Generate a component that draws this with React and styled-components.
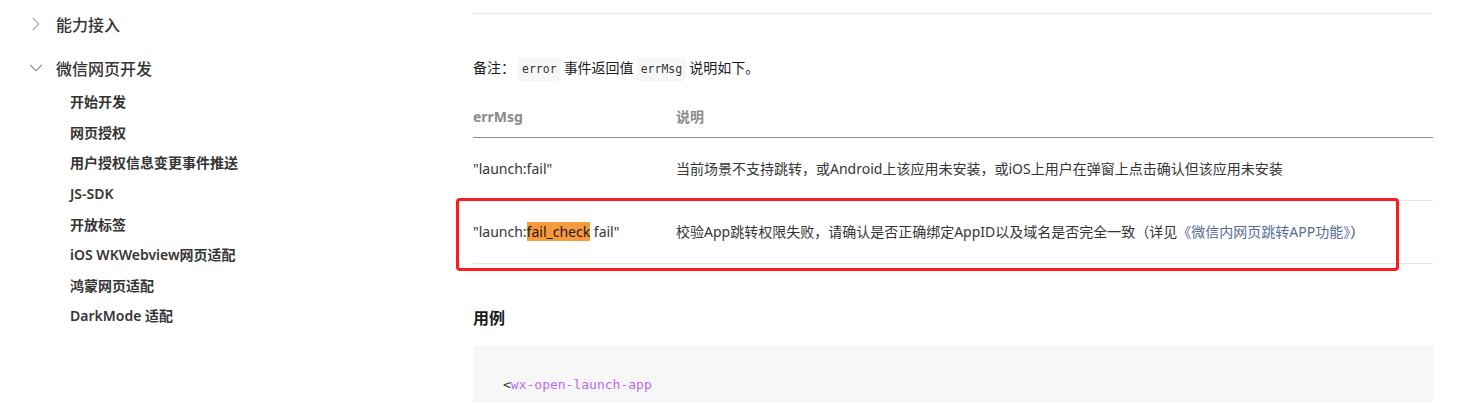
import styled, { createGlobalStyle } from "styled-components";
import { ChevronRight, ChevronDown } from "lucide-react";

const GlobalStyle = createGlobalStyle`
  body {
    margin: 0;
    background: #fff;
    font-family: "Noto Sans", "Noto Sans CJK SC", sans-serif;
    color: #353535;
  }
`;

const subItems = [
  "开始开发",
  "网页授权",
  "用户授权信息变更事件推送",
  "JS-SDK",
  "开放标签",
  "iOS WKWebview网页适配",
  "鸿蒙网页适配",
  "DarkMode 适配",
];

const App = () => {
  return (
    <Page>
      <GlobalStyle />
      <Sidebar>
        <GroupTitle>
          <ChevronRight size={22} strokeWidth={1.4} color="#b2b2b2" />
          <span>能力接入</span>
        </GroupTitle>
        <GroupTitle>
          <ChevronDown size={22} strokeWidth={1.4} color="#9a9a9a" />
          <span>微信网页开发</span>
        </GroupTitle>
        <SubList>
          {subItems.map((t) => (
            <SubItem key={t}>{t}</SubItem>
          ))}
        </SubList>
      </Sidebar>

      <Content>
        <TopRule />
        <Note>
          备注：<InlineCode>error</InlineCode>事件返回值<InlineCode>errMsg</InlineCode>说明如下。
        </Note>

        <TableWrap>
          <Table>
            <thead>
              <tr>
                <Th>errMsg</Th>
                <Th>说明</Th>
              </tr>
            </thead>
            <tbody>
              <tr>
                <Td>"launch:fail"</Td>
                <Td>当前场景不支持跳转，或Android上该应用未安装，或iOS上用户在弹窗上点击确认但该应用未安装</Td>
              </tr>
              <tr>
                <Td>
                  "launch:<Mark>fail_check</Mark> fail"
                </Td>
                <Td>
                  校验App跳转权限失败，请确认是否正确绑定AppID以及域名是否完全一致（详见
                  <Link>《微信内网页跳转APP功能》</Link>）
                </Td>
              </tr>
            </tbody>
          </Table>
          <RedBox />
        </TableWrap>

        <Heading>用例</Heading>
        <CodeBlock>
          <Punct>&lt;</Punct>
          <Tag>wx-open-launch-app</Tag>
        </CodeBlock>
      </Content>
    </Page>
  );
};

export default App;

const Page = styled.div`
  display: flex;
  width: 1477px;
  height: 403px;
  overflow: hidden;
`;

const Sidebar = styled.nav`
  width: 448px;
  padding: 2px 0 0 25px;
  flex-shrink: 0;
`;

const GroupTitle = styled.div`
  display: flex;
  align-items: center;
  gap: 9px;
  height: 44px;
  font-size: 16px;
  font-weight: 500;
  color: #353535;
`;

const SubList = styled.ul`
  list-style: none;
  margin: -4px 0 0;
  padding: 0 0 0 45px;
`;

const SubItem = styled.li`
  height: 30.6px;
  display: flex;
  align-items: center;
  font-size: 14px;
  font-weight: 600;
  color: #353535;
`;

const Content = styled.main`
  width: 960px;
  flex-shrink: 0;
`;

const TopRule = styled.div`
  height: 13px;
  border-bottom: 1px solid #e5e5e5;
`;

const Note = styled.p`
  margin: 42px 0 0;
  font-size: 14px;
  line-height: 24px;
  color: #1a1a1a;
`;

const InlineCode = styled.code`
  display: inline-block;
  font-family: "DejaVu Sans Mono", "Liberation Mono", monospace;
  font-size: 11.5px;
  line-height: 23px;
  padding: 0 4px;
  margin: 0 3px;
  background: #f7f7f7;
  border-radius: 3px;
  color: #353535;
  vertical-align: middle;
`;

const TableWrap = styled.div`
  position: relative;
  margin-top: 15px;
`;

const Table = styled.table`
  width: 100%;
  border-collapse: collapse;
  font-size: 14px;
`;

const Th = styled.th`
  text-align: left;
  font-weight: 700;
  color: #8c8c8c;
  height: 41px;
  padding: 0;
  border-bottom: 1px solid #8c8c8c;
  &:first-child {
    width: 203px;
  }
`;

const Td = styled.td`
  height: 62px;
  padding: 0;
  line-height: 24px;
  color: #353535;
  border-bottom: 1px solid #e5e5e5;
`;

const Mark = styled.span`
  background: #f89a3c;
  color: #1a1a1a;
`;

const Link = styled.span`
  color: #576b95;
`;

const RedBox = styled.div`
  position: absolute;
  left: -17px;
  top: 102px;
  width: 943px;
  height: 73px;
  box-sizing: border-box;
  border: 3px solid #fb1d1d;
  border-radius: 4px;
  pointer-events: none;
`;

const Heading = styled.h3`
  margin: 42px 0 0;
  font-size: 16px;
  line-height: 24px;
  font-weight: 700;
  color: #1a1a1a;
`;

const CodeBlock = styled.pre`
  margin: 16px 0 0;
  padding: 30px 30px 20px;
  background: #f7f7f7;
  font-family: "DejaVu Sans Mono", "Liberation Mono", monospace;
  font-size: 13px;
  line-height: 18px;
`;

const Punct = styled.span`
  color: #333;
`;

const Tag = styled.span`
  color: #b86af2;
`;
